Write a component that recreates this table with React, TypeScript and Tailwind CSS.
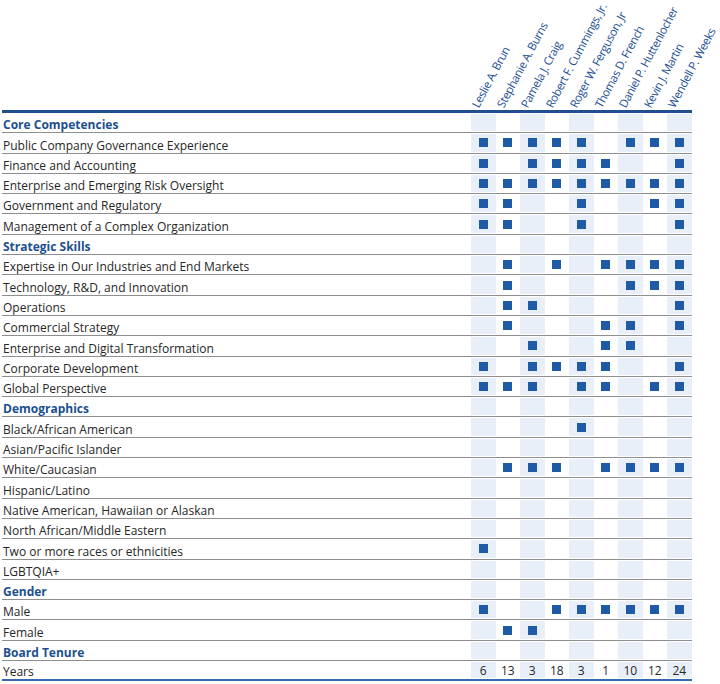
const names = [
  "Leslie A. Brun",
  "Stephanie A. Burns",
  "Pamela J. Craig",
  "Robert F. Cummings, Jr.",
  "Roger W. Ferguson, Jr",
  "Thomas D. French",
  "Daniel P. Huttenlocher",
  "Kevin J. Martin",
  "Wendell P. Weeks",
]

type Row = { label: string; section?: boolean; marks?: string; values?: string[] }

const rows: Row[] = [
  { label: "Core Competencies", section: true },
  { label: "Public Company Governance Experience", marks: "111110111" },
  { label: "Finance and Accounting", marks: "101111001" },
  { label: "Enterprise and Emerging Risk Oversight", marks: "111111111" },
  { label: "Government and Regulatory", marks: "110010011" },
  { label: "Management of a Complex Organization", marks: "110010001" },
  { label: "Strategic Skills", section: true },
  { label: "Expertise in Our Industries and End Markets", marks: "010101111" },
  { label: "Technology, R&D, and Innovation", marks: "010000111" },
  { label: "Operations", marks: "011000001" },
  { label: "Commercial Strategy", marks: "010001101" },
  { label: "Enterprise and Digital Transformation", marks: "001001100" },
  { label: "Corporate Development", marks: "101111001" },
  { label: "Global Perspective", marks: "111011011" },
  { label: "Demographics", section: true },
  { label: "Black/African American", marks: "000010000" },
  { label: "Asian/Pacific Islander", marks: "000000000" },
  { label: "White/Caucasian", marks: "011101111" },
  { label: "Hispanic/Latino", marks: "000000000" },
  { label: "Native American, Hawaiian or Alaskan", marks: "000000000" },
  { label: "North African/Middle Eastern", marks: "000000000" },
  { label: "Two or more races or ethnicities", marks: "100000000" },
  { label: "LGBTQIA+", marks: "000000000" },
  { label: "Gender", section: true },
  { label: "Male", marks: "100111111" },
  { label: "Female", marks: "011000000" },
  { label: "Board Tenure", section: true },
  { label: "Years", values: ["6", "13", "3", "18", "3", "1", "10", "12", "24"] },
]

export default function App() {
  return (
    <div className="w-[720px] h-[684px] bg-white pl-[2px] text-[12px] text-[#262626]" style={{ fontFamily: '"Open Sans", "Noto Sans", sans-serif' }}>
      {/* rotated director names */}
      <div className="grid grid-cols-[469px_repeat(9,24.5px)] h-[110px]">
        <div />
        {names.map((n) => (
          <div key={n} className="relative">
            <span className="absolute left-[9px] bottom-[1px] origin-bottom-left -rotate-[62deg] whitespace-nowrap text-[11.5px] font-medium tracking-[-0.4px] leading-none text-[#1c4f94]">
              {n}
            </span>
          </div>
        ))}
      </div>
      <div className="w-[690px] h-[3px] bg-[#1f4f8f]" />

      {rows.map((r, ri) => {
        const last = ri === rows.length - 1
        const line = last ? "border-b-2 border-[#3568ad]" : "border-b border-[#8e8e8e]"
        return (
          <div key={r.label} className="grid grid-cols-[469px_repeat(9,24.5px)] h-[20.3px]">
            <div className={`${line} flex items-end pb-[1px] pl-px leading-none`}>
              <span className={r.section ? "font-bold text-[#1c4f8f]" : ""}>{r.label}</span>
            </div>
            {names.map((_, ci) => (
              <div key={ci} className={`${line} py-px`}>
                <div className={`h-full flex items-center justify-center ${ci % 2 === 0 ? "bg-[#e9eff8]" : ""}`}>
                  {r.marks && r.marks[ci] === "1" && <div className="w-[9px] h-[9px] bg-[#1e5aa6]" />}
                  {r.values && <span className="leading-none pt-[2px]">{r.values[ci]}</span>}
                </div>
              </div>
            ))}
          </div>
        )
      })}
    </div>
  )
}
